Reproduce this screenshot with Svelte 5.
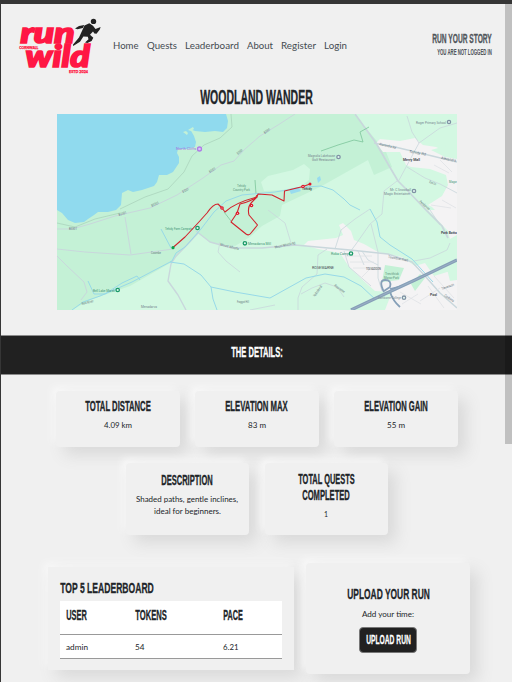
<script>
  const nav = [
    ['Home', 25.5], ['Quests', 30], ['Leaderboard', 54], ['About', 26], ['Register', 35], ['Login', 23]
  ];
  const stats = [
    [['Total Distance', 66], '4.09 km'],
    [['Elevation Max', 63], '83 m'],
    [['Elevation Gain', 64], '55 m']
  ];
  // [x, y, text, rotation, width]
  const roads = [
    [69, 230, 'B3301', 0, 8], [119, 216, 'B3301', -17, 8],
    [152, 207, 'B3301', -25, 8], [183, 193, 'B3301', -25, 7], [210, 173, 'B3301', -33, 7],
    [238, 155, 'B3301', -40, 7], [265, 134, 'B3301', -36, 7],
    [151, 253.5, 'Coombe', 0, 10], [275, 248.5, 'Mount Whistle Rd', -12, 21],
    [220, 245.5, 'Mount Whistle', 14, 19], [379, 145, 'Alexandra Rd', 14, 17],
    [409, 152.5, 'Tehidy Rd', 11, 17], [441, 159, 'Alexandra', 11, 15],
    [388, 258, 'Treswithian Road', 10, 20], [429, 183, 'Park Ln', 20, 7],
    [419, 202, 'Pendarves', 40, 13], [334, 286, 'Rosewarne', 36, 12],
    [315, 297, 'Reskadinnick', -55, 13], [82, 305, 'Red River', -14, 12],
    [237, 303, 'Fraggot Hill', 0, 12], [444, 296, 'Camborne', 35, 11],
    [442, 290, 'Trevenson', -20, 13]
  ];
</script>

{#snippet caps(text, width, cap, color = '#212529')}
  <svg class="caps" width={width} height={cap + 2} role="img" aria-label={text}>
    <text x="0.2" y={cap} font-size={cap / 0.72} textLength={width - 0.4} lengthAdjust="spacingAndGlyphs" fill={color} stroke={color} stroke-width={cap > 7 ? 0.3 : 0.1}>{text.toUpperCase()}</text>
  </svg>
{/snippet}

{#snippet label(text, width, size = 8, color = '#212529')}
  <svg class="label" width={width} height="12">
    <text x="0" y="9" font-size={size} textLength={width} lengthAdjust="spacingAndGlyphs" fill={color}>{text}</text>
  </svg>
{/snippet}

<div class="page">
  <header>
    <svg class="logo" viewBox="18 16 84 60" width="84" height="60">
      <g fill="#ff1744" stroke="#ff1744" stroke-width="1.7" font-style="italic" font-weight="900" font-family="Lato, sans-serif">
        <text x="20.5" y="43" font-size="28.5" textLength="54" lengthAdjust="spacingAndGlyphs">run</text>
        <text x="25.500" y="67" font-size="31" textLength="64.500" lengthAdjust="spacingAndGlyphs">wild</text>
      </g>
      <g fill="#ff1744" stroke="#ff1744" stroke-width=".25" font-weight="900" font-family="Lato, sans-serif" font-size="3.9">
        <text x="19.3" y="49" textLength="19" lengthAdjust="spacingAndGlyphs">CORNWALL</text>
        <text x="69" y="73" textLength="19" lengthAdjust="spacingAndGlyphs">ESTD 2024</text>
      </g>
      <path d="M84 27 77 36 72.500 46.500 76 46.500 88 40 92 34Z" fill="#f0f0f0" />
      <g fill="#222">
        <circle cx="93.5" cy="21.4" r="2.7" />
        <path d="M75 28.4 79 26 84.3 25.1 82.8 28 77.5 29.3Z" />
        <path d="M84.5 25.4 89.3 23.2 93 25.8 95.5 29 100.6 27 99.8 29.4 96.5 33.7 94.4 33.4 93 31.5 90 34.7 93.3 37.7 91.6 41 87.4 43 85 42.5 88.5 39.3 87.8 36.8 83.4 36.5 80 41.7 73.2 46 72.9 44.7 79 37.5 81.5 32Z" />
      </g>
    </svg>
    <nav>
      {#each nav as [text, width]}<a href="#top">{@render label(text, width, 10, '#444b50')}</a>{/each}
    </nav>
    <div class="story">
      {@render caps('Run your story', 60, 8.7, '#50565b')}
      {@render caps('You are not logged in', 55, 6, '#50565b')}
    </div>
  </header>

  <h1>{@render caps('Woodland Wander', 113, 14)}</h1>

  <svg class="map" viewBox="57 114 400 196" width="400" height="196">
    <rect x="57" y="114" width="400" height="196" fill="#c4f1d6" />
    <path fill="#90daee" d="M57 114H226L228 121 227 128 223 132 215 131 205 132 195 131 190 129 194 136 196 142 195 147 187 149 178 149 177 153 179 157 179 163 173 172 167 175 159 175 157 182 154 186 142 190 133 192 128 190 122 193 121 205 116 210 108 212 98 212 94 215 88 219 84 222 75 223 68 220 62 213 57 210Z" />
    <path fill="#c4f1d6" d="M183 132 186 131 188 133 187 135ZM188 130 193 127 194 129 191 131Z" />
    <path fill="#d3f8e2" d="M72 310 90 300 130 286 172 262 198 233 212 243 235 246 250 237 262 226 280 216 282 205 320 187 368 160 374 175 392 167 386 152 376 140 354 114H457V310Z" />
    <path fill="#d3f8e2" d="M261 182 268 176 293 170 304 164 310 169 309 180 300 187 282 190 264 191Z" />
    <g fill="#f4f3f4">
      <path d="M376 143 380 139 400 141 415 138 423 145 436 147 457 157V235L450 239 445 220 432 207 428 205 442 196 448 185 446 175 430 169 411 167 406 165 400 152 383 152Z" />
      <path d="M304 245 308 241 336 238 343 235 339 225 343 223 351 231 354 240 364 244 378 252 402 257 415 266 425 263 434 276 457 269V310H385L392 292 375 291 367 284 349 267 340 253 318 249Z" />
      <path d="M428 210 457 210V233L447 230Z" />
    </g>
    <path fill="#d3f8e2" d="M440 114H457V159L445 157 431 150 449 145 455 134ZM446 265 457 260V280L450 281Z" />
    <path fill="#c4f1d6" d="M385 265 404 268 399 280 382 282ZM411 284 420 274 425 278 415 291Z" />
    <path fill="#98dcef" d="M289 189 298 187 301 191 291 194ZM317 178 320 176 321 180 318 183Z" />

    <g fill="none" stroke="#c9d7dc" stroke-width="1" stroke-linejoin="round">
      <path d="M57 229 72 229 90 224 115 216 150 208 177 195 203 178 221 165 234 161 245 149 260 136 278 125 295 114" />
      <path d="M57 249 85 252 130 255 173 249 M125 217 131 254 M57 256 67 266 84 282 87 292 81 300" />
      <path stroke-width="1.4" d="M198 233 187 245 176 256 171 264 168 281 178 295 186 310 M196 231 210 242 232 248 262 248 295 245 350 250 388 254 412 262 425 276 440 293 457 308" />
      <path stroke-width="1.7" d="M355 114 368 132 376 143 388 164 398 181 407 190 426 210 442 226 448 238" />
      <path stroke-width="1.5" d="M374 143 395 147 420 153 457 162" />
      <path stroke-width=".8" d="M398 182 419 143 440 128 457 123 M397 181 384 191 382 214 370 224 356 244 350 252 M371 224 378 252 378 278 382 291 M407 167 425 178 440 184 457 193 M407 116 412 132 419 143" />
      <path stroke-width=".8" d="M327 249 318 255 317 274 302 287 298 298 298 310 M301 294 312 288 325 283 337 287 344 297 M268 210 285 223 291 243 M220 242 218 252 226 261 240 272 M250 310 275 305" />
      <path stroke-width=".8" d="M450 243 447 250 430 258 414 261 M335 249 341 230 355 219 370 209 M344 251 349 267 371 286 M358 251 364 265 M362 251 368 260 378 265 M430 210 440 225" />
    </g>
    <path fill="none" stroke="#dfe2e6" stroke-width=".8" d="M346 256h26M350 262h24M353 268h22M361 278l10-10M434 165l15 8M440 160l12 12M431 205l20 3M442 200l14 8M400 292l21 12M402 304l16-10M428 286l16 22M420 301l20-13M434 276l20 22" />
    <path fill="none" stroke="#a8d0b9" stroke-width=".7" d="M231 114 232 127 220 138 204 145 192 156 184 172 168 189 145 197 120 209 M57 223 75 227 95 219 120 213" />
    <path fill="none" stroke="#7cc59b" stroke-width=".8" d="M321 151 338 145 354 140 363 142 360 132 369 127 M255 180 256 194 M224 212 231 221" />
    <path fill="none" stroke="#97d9e8" stroke-linejoin="round" d="M72 310 83 302 100 296 132 282 172 261 176 253 185 247 201 229 214 212 226 201 242 195 275 192 305 187 321 186 333 190 344 199 350 205 360 210 M370 209 377 222 380 237 390 245 412 259 422 270 433 282 M170 262 184 264 201 275 211 287 235 292 270 298 288 288 306 278 325 274 344 277 361 286 376 300 M211 287 213 299 217 310 M161 229 171 248 M88 281 94 294 105 294 122 283 137 276 140 280" />
    <g fill="none" stroke="#869fb8">
      <path stroke-width="3.2" d="M351 310 389 292 415 280 457 260" />
      <path stroke-width="1.8" d="M384 292Q378 280 385 280T390 287L384 291M390 289 402 286 M390 292Q393 301 400 307" />
    </g>
    <path stroke="#aebfd0" stroke-width=".5" fill="none" d="M351 310 389 292 415 280 457 260" />

    <g class="tiny" fill="#66757c" font-size="3.7">
      {#each roads as [x, y, text, turn, width]}
        <text transform="translate({x} {y}) rotate({turn})" textLength={width} lengthAdjust="spacingAndGlyphs">{text}</text>
      {/each}
    </g>
    <g class="tiny" font-size="3.5">
      <text x="176" y="150.300" fill="#a66ee0" textLength="20" lengthAdjust="spacingAndGlyphs">North Cliffs</text>
      <text x="165" y="230" fill="#3e9375" textLength="28" lengthAdjust="spacingAndGlyphs">Tehidy Farm Campsite</text>
      <text x="93" y="291.5" fill="#3e9375" textLength="22" lengthAdjust="spacingAndGlyphs">Bell Lake Marsh</text>
      <text x="248" y="245" fill="#3e9375" textLength="23" lengthAdjust="spacingAndGlyphs">Menadarva Mill</text>
      <text x="331" y="255" fill="#3e9375" textLength="18" lengthAdjust="spacingAndGlyphs">Roka Camp</text>
      <text x="237" y="187" fill="#59937c" textLength="9" lengthAdjust="spacingAndGlyphs">Tehidy</text>
      <text x="233" y="190.5" fill="#59937c" textLength="17" lengthAdjust="spacingAndGlyphs">Country Park</text>
      <text x="308" y="157" fill="#75858e" textLength="27" lengthAdjust="spacingAndGlyphs">Magnolia Lakehouse</text>
      <text x="312" y="160.500" fill="#75858e" textLength="23" lengthAdjust="spacingAndGlyphs">Golf Restaurant</text>
      <text x="416" y="123.5" fill="#75858e" textLength="30" lengthAdjust="spacingAndGlyphs">Roger Primary School</text>
      <text x="390" y="191" fill="#75858e" textLength="21" lengthAdjust="spacingAndGlyphs">Mr. C Snowball</text>
      <text x="384" y="194.5" fill="#75858e" textLength="26" lengthAdjust="spacingAndGlyphs">Magic Entertainer</text>
      <text x="385" y="275" fill="#59937c" textLength="14" lengthAdjust="spacingAndGlyphs">Trevithick</text>
      <text x="384" y="279" fill="#59937c" textLength="15" lengthAdjust="spacingAndGlyphs">Manor Park</text>
      <text x="378" y="299" fill="#75858e" textLength="23" lengthAdjust="spacingAndGlyphs">Camborne College</text>
      <text x="141" y="308" fill="#75858e" textLength="16" lengthAdjust="spacingAndGlyphs">Menadarva</text>
      <text x="449" y="183" fill="#3e9375" textLength="8" lengthAdjust="spacingAndGlyphs">Magor</text>
    </g>
    <g class="tiny" fill="#444c51" font-weight="700" font-size="4.2">
      <text x="403" y="161" textLength="17" lengthAdjust="spacingAndGlyphs">Merry Mall</text>
      <text x="441" y="234" textLength="15.800" lengthAdjust="spacingAndGlyphs">Park Botto</text>
      <text x="430" y="296" textLength="7" lengthAdjust="spacingAndGlyphs">Pool</text>
      <text x="302" y="190" textLength="10" lengthAdjust="spacingAndGlyphs" font-size="3.8">Tehidy</text>
      <text x="312" y="269" textLength="22" lengthAdjust="spacingAndGlyphs" font-weight="400" font-size="3.800">ROSEWARNE</text>
      <text x="366" y="270" textLength="15" lengthAdjust="spacingAndGlyphs" font-weight="400" font-size="3.2">TOLVADDON</text>
    </g>
    <g fill="#e3f6f0" stroke-width="1.3">
      <circle cx="199.5" cy="149" r="2" stroke="#b07be8" fill="#d9c2f5" />
      <g stroke="#1b9a68">
        <circle cx="197.5" cy="228" r="1.7" /><circle cx="117.7" cy="290" r="1.7" />
        <circle cx="244.9" cy="243.3" r="1.7" /><circle cx="351" cy="253.5" r="1.7" />
      </g>
      <g stroke="#7f92a4">
        <circle cx="338.5" cy="157" r="1.7" /><circle cx="449" cy="122" r="1.6" />
        <circle cx="414" cy="191" r="1.7" /><circle cx="404" cy="297.7" r="1.7" />
      </g>
    </g>
    <g fill="none" stroke="#d2232d" stroke-width="1.1" stroke-linejoin="round">
      <path d="M173 247.500 185 237 198 223 207 213Q213 204 218 204L222 208 225 212Q234 203 257 197L258 194 272 195 284 201 284.500 191 303 186.500 310 184" />
      <path d="M257 195Q256 200 240 204L237 213 231 222 246 234Q249 236 251 233L257.500 225 249 215Q247 207 252 202L257 197" />
    </g>
    <g fill="#e0182d">
      <circle cx="310" cy="184" r="1.5" /><circle cx="303" cy="186.500" r="1.8" />
      <circle cx="222" cy="208" r="1.8" /><circle cx="237.500" cy="213.300" r="1.8" />
      <circle cx="251.500" cy="205.500" r="1.8" />
    </g>
    <g fill="#fff"><circle cx="303" cy="186.500" r=".6" /><circle cx="222" cy="208" r=".5" /><circle cx="237.500" cy="213.300" r=".5" /><circle cx="251.500" cy="205.500" r=".5" /></g>
    <circle cx="173" cy="247.700" r="1.6" fill="#0ba14c" />
  </svg>

  <section class="band">{@render caps('The details:', 52, 10, '#fff')}</section>

  <section class="cards">
    {#each stats as [[title, width], value]}
      <article class="card">
        {@render caps(title, width, 10)}
        <p>{@render label(value, value.length > 5 ? 28 : 18)}</p>
      </article>
    {/each}
    <article class="card tall first">
      {@render caps('Description', 52, 10)}
      <p>{@render label('Shaded paths, gentle inclines,', 102)}{@render label('ideal for beginners.', 67)}</p>
    </article>
    <article class="card tall">
      {@render caps('Total Quests', 57, 10)}
      <div class="second">{@render caps('Completed', 48, 10)}</div>
      <p>{@render label('1', 4)}</p>
    </article>
  </section>

  <section class="bottom">
    <div class="board">
      <h2>{@render caps('Top 5 Leaderboard', 94, 11)}</h2>
      <table>
        <thead>
          <tr>
            <th>{@render caps('User', 21, 10)}</th>
            <th>{@render caps('Tokens', 32, 10)}</th>
            <th>{@render caps('Pace', 20, 10)}</th>
          </tr>
        </thead>
        <tbody>
          <tr>
            <td>{@render label('admin', 22)}</td>
            <td>{@render label('54', 9.5)}</td>
            <td>{@render label('6.21', 15.5)}</td>
          </tr>
        </tbody>
      </table>
    </div>
    <div class="upload">
      {@render caps('Upload your run', 83, 11)}
      <p>{@render label('Add your time:', 52)}</p>
      <button>{@render caps('Upload run', 45, 9.3, '#fff')}</button>
    </div>
  </section>
  <div class="scroll"></div>
</div>

<style>
  .page {
    position: relative;
    box-sizing: border-box;
    width: 512px;
    height: 682px;
    overflow: hidden;
    background: #f0f0f0;
    border-top: 4px solid #363636;
    border-left: 1px solid #363636;
    font-family: Lato, sans-serif;
    color: #212529;
  }
  svg { display: block; flex: none; }
  .caps { overflow: visible; font-family: 'Liberation Sans Narrow', 'Liberation Sans', sans-serif; font-weight: 700; }
  .label, .logo { overflow: visible; font-family: Lato, sans-serif; }
  .tiny { font-family: Roboto, sans-serif; }
  h1, h2, p { margin: 0; }
  header {
    display: flex;
    align-items: flex-start;
    height: 83px;
    padding: 12px 20px 0 17px;
    box-sizing: border-box;
  }
  nav { display: flex; gap: 8px; margin: 24px 0 0 11px; }
  a { text-decoration: none; }
  .story {
    display: flex;
    flex-direction: column;
    align-items: flex-end;
    gap: 5.3px;
    margin: 17.500px 0 0 auto;
  }
  h1 { display: flex; justify-content: center; height: 27px; padding: 3px 1px 0 0; box-sizing: border-box; }
  .map { margin-left: 56px; }
  .band {
    display: flex;
    justify-content: center;
    box-sizing: border-box;
    height: 40px;
    margin-top: 25px;
    padding: 11px 0 0 0;
    background: #212121;
    border: solid #8b8b8b;
    border-width: 1px 0;
  }
  .cards {
    display: flex;
    flex-wrap: wrap;
    gap: 16px 15.500px;
    width: 403px;
    padding: 15.500px 0 0 55px;
  }
  .card {
    display: flex;
    flex-direction: column;
    align-items: center;
    box-sizing: border-box;
    width: 123.500px;
    height: 56.500px;
    padding-top: 10.500px;
    border-radius: 4px;
    background: #f0f0f0;
    box-shadow: 8px 8px 16px #d9d9d9, -4px -4px 7px #f8f8f8;
  }
  .card p { display: flex; flex-direction: column; align-items: center; margin-top: 6px; }
  .tall { height: 72px; }
  .tall.first { margin-left: 69.500px; padding-top: 12px; }
  .second { margin-top: 4px; }
  .bottom { display: flex; align-items: flex-start; gap: 12px; padding: 28px 0 0 47px; }
  .board {
    box-sizing: border-box;
    width: 246px;
    height: 103px;
    margin-top: 4px;
    padding: 15px 12px 0;
    background: #f0f0f0;
    box-shadow: 8px 8px 16px #d9d9d9, -4px -4px 7px #f8f8f8;
  }
  h2 { height: 19px; }
  table { width: 222px; border-collapse: collapse; table-layout: fixed; background: #fff; }
  th, td { box-sizing: border-box; padding: 0 0 0 6px; vertical-align: top; border-bottom: 1px solid #999; }
  th:first-child { width: 68.500px; }
  th:nth-child(2) { width: 88px; }
  th { height: 33px; padding-top: 8.500px; }
  td { height: 24px; padding-top: 6px; }
  .upload {
    display: flex;
    flex-direction: column;
    align-items: center;
    box-sizing: border-box;
    width: 164px;
    height: 111px;
    padding-top: 25px;
    border-radius: 4px;
    background: #f0f0f0;
    box-shadow: 8px 8px 16px #d9d9d9, -4px -4px 7px #f8f8f8;
  }
  .upload p { margin-top: 7px; }
  button {
    display: flex;
    justify-content: center;
    width: 58px;
    height: 25.500px;
    box-sizing: border-box;
    margin-top: 7px;
    padding: 7px 0 0;
    border: 1px solid #777;
    border-radius: 4px;
    background: #212121;
  }
  .scroll {
    position: absolute;
    top: 0;
    right: 0;
    width: 7px;
    height: 440px;
    background: rgba(0, 0, 0, .2);
  }
</style>
